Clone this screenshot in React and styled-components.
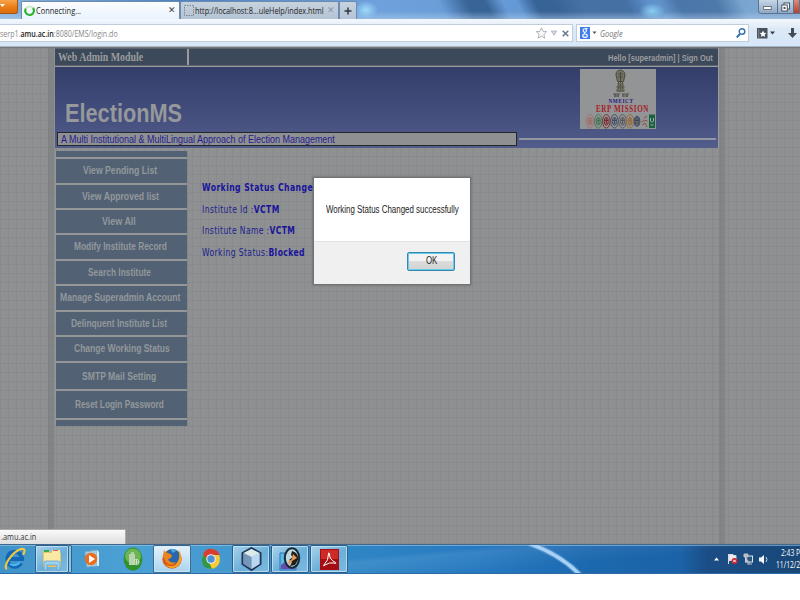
import React, { useLayoutEffect, useRef, useState } from "react";
import styled, { createGlobalStyle } from "styled-components";

const Global = createGlobalStyle`
  *{box-sizing:border-box}
  body{margin:0;background:#fff;overflow:hidden}
`;
const ui = '"Open Sans","Noto Sans",sans-serif';
const arial = '"Liberation Sans",Arial,sans-serif';

/* Text condensed or stretched to a given width */
const FitBox = styled.span`
  display:block;flex:none;width:${p => p.$w}px;white-space:nowrap;overflow:visible;
  margin-left:${p => p.$ml || 0}px;
`;
const FitInner = styled.span`display:inline-block;transform-origin:0 50%;white-space:pre;`;
function Fit({ w, ml, children }) {
  const ref = useRef(null);
  const [k, setK] = useState(1);
  useLayoutEffect(() => { setK(w / ref.current.offsetWidth); }, [w]);
  return <FitBox $w={w} $ml={ml}><FitInner ref={ref} style={{ transform: `scaleX(${k})` }}>{children}</FitInner></FitBox>;
}

const Screen = styled.div`width:800px;height:600px;display:flex;flex-direction:column;overflow:hidden;background:#fff;`;

/* Browser chrome */
const TabBar = styled.div`
  height:19px;flex:none;display:flex;align-items:stretch;font:9.6px/19px ${ui};color:#222;
  background:
    radial-gradient(ellipse 12px 9px at 366px 10px,#9fdcf8,transparent),
    radial-gradient(ellipse 13px 8px at 652px 11px,#8ccdf3,transparent),
    linear-gradient(180deg,rgba(255,255,255,0) 60%,rgba(190,215,240,.45)),
    linear-gradient(62deg,transparent 0 395px,rgba(48,90,140,.85) 420px 436px,transparent 452px 464px,rgba(48,90,140,.85) 480px 496px,rgba(62,104,154,.8) 520px 560px,transparent 580px 590px,rgba(62,104,154,.7) 606px 640px,transparent 662px),
    linear-gradient(90deg,#89b3de 0,#4a82c4 180px,#6fa2dc 380px,#6498d4 530px,#5c8fc9 640px,#7ba6d0 750px,#7fa5cc);
`;
const MenuButton = styled.div`
  width:18px;height:14px;margin-right:3px;background:linear-gradient(#f7a44c,#ea7d18 55%,#dd6d0c);
  border:1px solid #a65413;border-top:0;border-left:0;border-radius:0 0 3px 0;line-height:0;
`;
const Tab = styled.div`
  width:${p => p.$w}px;display:flex;align-items:center;padding-left:${p => p.$pl}px;height:18px;
  border:1px solid #6f8bab;border-width:1px 1px 0;margin-top:1px;border-radius:2px 2px 0 0;line-height:18px;
  background:${p => p.$active ? "linear-gradient(#fbfdff,#e9f3fd)" : "linear-gradient(#c7d2de,#b4c3d5)"};
`;
const Close = styled.span`margin-left:auto;padding-right:${p => p.$pr || 3}px;font:9px/17px ${arial};color:${p => p.$c || "#444"};`;
const WindowButtons = styled.div`
  margin-left:auto;width:42px;height:14px;display:flex;border:1px solid #5c7490;border-width:0 0 1px 1px;border-radius:0 0 0 4px;overflow:hidden;
`;
const WinBtn = styled.div`
  width:${p => p.$w}px;background:${p => p.$red ? "linear-gradient(#d98c7e,#b93f28)" : "linear-gradient(#c6d6e6,#8fa9c4)"};
  border-right:1px solid #5c7490;display:flex;align-items:center;justify-content:center;
`;
const Toolbar = styled.div`
  height:28px;flex:none;display:flex;align-items:center;padding:1px 0 0;
  background:linear-gradient(#f4f8fd,#dbe8f6 40%,#d6e7f8);border-bottom:1px solid #a4b5c8;font:9.6px/15px ${ui};color:#888;
`;
const Field = styled.div`
  width:${p => p.$w}px;height:18px;background:#fff;border:1px solid #bfcddd;border-left-width:${p => p.$bl ?? 1}px;
  display:flex;align-items:center;margin-right:${p => p.$mr}px;flex:none;
`;
const Icon = styled.svg`display:block;flex:none;margin-left:${p => p.$ml || 0}px;overflow:visible;`;
const Url = styled.span`b{color:#222;font-weight:600}`;
const Hint = styled.span`font-style:italic;color:#777;`;

/* Page */
const Page = styled.main`
  height:497px;flex:none;position:relative;padding:0 0 0 55px;border-top:1px solid #777;
  background-color:#8e9092;
  background-image:
    linear-gradient(90deg,transparent 48px,rgba(122,125,125,.6) 48px 54px,transparent 54px 719px,rgba(122,125,125,.6) 719px 725px,transparent 725px),
    repeating-linear-gradient(90deg,rgba(108,113,124,.17) 0 1px,transparent 1px 8px),
    repeating-linear-gradient(180deg,rgba(108,113,124,.17) 0 1px,transparent 1px 9px);
`;
const Header = styled.header`width:664px;border-right:1px solid #9a9b9d;`;
const TopRow = styled.div`display:flex;height:18px;gap:2px;background:#999b9d;border-top:1px solid #5d646d;border-bottom:1px solid #5d646d;`;
const TopCell = styled.div`
  width:${p => p.$w}px;background:#3c495a;color:#9a9c9e;display:flex;align-items:center;justify-content:${p => p.$end ? "flex-end" : "flex-start"};
  padding:${p => p.$end ? "1px 5px 0 0" : "1px 0 0 3px"};
  font:bold ${p => p.$end ? `9.8px/15px ${arial}` : `11.5px/15px "Liberation Serif",serif`};
`;
const Banner = styled.div`
  height:82px;border-top:1px solid #999b9d;background:linear-gradient(#333f69,#424d7c 55%,#525d8b);
  display:grid;grid-template-columns:465px 1fr;
`;
const BannerLeft = styled.div`padding:32px 0 0 10px;`;
const Brand = styled.h1`margin:0;font:bold 26px/28px ${arial};color:#96989b;`;
const Tagline = styled.div`
  margin:5px 0 0 -8px;width:460px;height:14px;border:1px solid #26272c;background:#8f9091;padding-left:3px;
  font:10.5px/12px ${arial};color:#24208e;
`;
const BannerRight = styled.div`padding:2px 2px 0 0;`;
const Logo = styled.svg`display:block;margin-left:60px;width:76px;height:60px;`;
const Rule = styled.div`height:2px;background:#9295a2;margin:9px 0 0 -1px;`;

const Body = styled.div`display:flex;margin-top:2px;`;
const Nav = styled.nav`width:133px;padding:0 0 0 1px;display:flex;flex-direction:column;gap:2px;background:#949697;height:275px;margin-top:1px;border-right:1px solid #85888b;`;
const NavItem = styled.div`
  height:${p => p.$h}px;background:#526274;color:#93979b;flex:none;
  font:bold 10.8px/${p => p.$h}px ${arial};display:flex;padding-left:${p => p.$pl || 0}px;
`;
const Content = styled.section`
  padding:27px 0 0 14px;font:9.8px/21.6px "DejaVu Sans","Noto Sans",sans-serif;letter-spacing:.5px;color:#211d8e;
  b{color:#19149a}
`;
const StatusPopup = styled.div`
  position:absolute;left:0;bottom:0;width:126px;height:15px;background:linear-gradient(#fafafa,#dedede);
  border:1px solid #aaa;border-width:1px 1px 0 0;font:9.5px/14px ${ui};color:#333;padding-left:1px;
`;
const Dialog = styled.div`
  position:absolute;left:313px;top:129px;width:158px;height:108px;background:#fff;border:1px solid #727374;
  box-shadow:0 0 2px rgba(50,50,50,.5);display:flex;flex-direction:column;
`;
const Message = styled.div`height:63px;padding:25px 0 0 12px;font:10px/14px ${arial};color:#222;`;
const Actions = styled.div`flex:1;background:#f0f0f0;border-top:1px solid #e2e2e2;padding:10px 15px 0 0;display:flex;justify-content:flex-end;`;
const Ok = styled.button`
  width:48px;height:19px;padding:0;border:1px solid #3b86ab;border-radius:2px;box-shadow:inset 0 0 0 1px #63cdf0;
  background:linear-gradient(#f3f3f3 50%,#dcdcdc 50%,#d2d2d2);font:10px/16px ${arial};color:#222;
  display:flex;justify-content:center;
`;

/* Taskbar */
const Taskbar = styled.footer`
  height:30px;flex:none;display:flex;border-top:1px solid #43678b;border-bottom:1px solid #2c6ba8;position:relative;
  background:linear-gradient(175deg,transparent 45%,rgba(255,255,255,.08) 50%,transparent 70%),
  linear-gradient(90deg,#3f93c9 0,#4ba0d4 130px,#4599cf 220px,#2f86c4 350px,#2779c1 480px,#1c68ae 590px,#1c62a8 680px,#1b4d85 708px,#194878 800px);
  box-shadow:inset 0 1px 0 rgba(160,210,240,.55);
`;
const Swoosh = styled.svg`position:absolute;left:490px;top:0;width:120px;height:28px;`;
const Task = styled.div`
  width:${p => p.$w}px;margin-left:${p => p.$ml || 0}px;height:28px;display:flex;align-items:center;justify-content:center;
  border:1px solid ${p => p.$open ? "rgba(20,65,105,.75)" : "transparent"};
  box-shadow:${p => p.$open ? "inset 0 0 0 1px rgba(210,238,255,.65)" : "none"};border-radius:2px;
  background:${p => p.$active ? "linear-gradient(#e4f2fb,#a9d4ee)" : p.$open ? "linear-gradient(145deg,#a9d2ea,#6bafd9 55%,#7dbbe0)" : "transparent"};
`;
const Stack = styled.div`
  width:3px;height:28px;border:solid rgba(20,65,105,.75);border-width:1px 1px 1px 0;border-radius:0 2px 2px 0;background:#8cc4e4;
`;
const Tray = styled.div`margin-left:auto;width:88px;display:flex;align-items:center;`;
const Clock = styled.div`
  margin-left:8px;width:25px;font:9.5px/12.5px ${ui};color:#fff;white-space:nowrap;
`;

const items = [
  ["View Pending List", 74, 27, 23.8], ["View Approved list", 77, 26, 23.2], ["View All", 34, 46, 23.4],
  ["Modify Institute Record", 93, 18, 23.4], ["Search Institute", 63, 32, 23.4], ["Manage Superadmin Account", 120, 4, 23.4],
  ["Delinquent Institute List", 96, 15, 23.6], ["Change Working Status", 96, 18, 23.7], ["SMTP Mail Setting", 74, 26, 26.3], ["Reset Login Password", 89, 19, 26.4]
];

const Mission = () => (
  <Logo viewBox="0 0 76 60">
    <rect width="76" height="60" fill="#939495" />
    <g fill="none" stroke="#4b4b3c" strokeWidth="1">
      <path d="M38.500 1.500q-3 1-2.500 4.500l1.500 6.500h6l1.500-6.500q0-3-2.500-4.500-2-1-4 0z" fill="#747365" />
      <path d="M38 5h5M38 8h5M40.500 3v18M38.500 12v8M42.500 12v8M36.500 21q4 3 8 0M36.500 18h8" />
    </g>
    <path d="M37.500 14h6l1 9h-8z" fill="#5d5d4b" opacity=".65" />
    <path d="M33 25h7M42 25h7M34 27h5M43 27h5M35 25v3M38 25v3M43 25v3M47 25v3" stroke="#454136" strokeWidth=".8" />
    <g fontFamily='"Liberation Serif",serif' fontWeight="bold">
      <text x="28.500" y="34" fontSize="7" fill="#232083" textLength="25" letterSpacing=".8" lengthAdjust="spacingAndGlyphs">NMEICT</text>
      <text x="16" y="43.300" fontSize="9.400" fill="#a51c2a" textLength="53" letterSpacing=".8" lengthAdjust="spacingAndGlyphs">ERP MISSION</text>
    </g>
    {[["#a66d6d", 10], ["#407454", 18.300], ["#7b282d", 26.300], ["#3f4c65", 34.500], ["#555861", 42.500], ["#9a6a35", 50], ["#34436e", 57]].map(([c, x], i) => (
      <g key={x} fill="none" stroke={c}>
        <ellipse cx={x} cy="52.300" rx={i > 5 ? 2.8 : 3.700} ry={i > 5 ? 5 : 6.800} strokeWidth=".9" />
        <ellipse cx={x} cy="52.300" rx="2" ry="4" fill={i > 5 ? "#a18b32" : "#8b8989"} strokeWidth="1" />
        <path d={`M${x - 1.700} 51.500h3.400M${x} 49v6`} />
      </g>
    ))}
    <path d="M61.500 53q3-3 6-1M62 56l3-2 2 4M64 49l3-2" fill="none" stroke="#8c4f40" />
    <rect x="69" y="45.500" width="6" height="13.500" fill="#176341" />
    <path d="M70.500 49v3q1.500 3 3 0v-3M70.500 56h3" fill="none" stroke="#9aa" />
  </Logo>
);

export default function App() {
  return (
    <Screen>
      <Global />
      <TabBar>
        <MenuButton><Icon width="6" height="12" viewBox="0 0 6 12"><path d="M0 4h5L2.500 7z" fill="#fff" /></Icon></MenuButton>
        <Tab $w={159} $pl={2} $active>
          <Icon width="11" height="12" viewBox="0 0 11 12"><circle cx="5.500" cy="5.700" r="4.300" fill="none" stroke="#c9ecc7" strokeWidth="2" /><path d="M5.500 10a4.300 4.300 0 0 1-3.700-6.500M5.500 10a4.300 4.300 0 0 0 3.500-7" fill="none" stroke="#28b22d" strokeWidth="2" /></Icon>
          <Fit w={45} ml={1}>Connecting...</Fit><Close>✕</Close>
        </Tab>
        <Tab $w={159} $pl={3}>
          <Icon width="10" height="11" viewBox="0 0 10 11"><rect x=".5" y=".5" width="9" height="10" fill="none" stroke="#7b8793" strokeDasharray="1.500 1" /></Icon>
          <Fit w={129} ml={1}>http://localhost:8...uleHelp/index.html</Fit><Close $pr={3} $c="#8997a6">✕</Close>
        </Tab>
        <Tab $w={18} $pl={4}><Icon width="8" height="8" viewBox="0 0 8 8"><path d="M4 .5v7M.5 4h7" stroke="#303841" strokeWidth="1.500" /></Icon></Tab>
        <WindowButtons>
          <WinBtn $w={19}><Icon width="9" height="9" viewBox="0 0 9 9"><rect x=".7" y="4.500" width="7.500" height="3" fill="#fff" stroke="#555d68" strokeWidth=".8" /></Icon></WinBtn>
          <WinBtn $w={17}><Icon width="9" height="10" viewBox="0 0 9 10"><rect x="3" y="1" width="5.500" height="6" fill="#fff" stroke="#465262" /><rect x=".8" y="3" width="5.500" height="6" fill="#fff" stroke="#465262" /><rect x="2.500" y="5" width="2" height="2" fill="#465262" /></Icon></WinBtn>
          <WinBtn $w={6} $red />
        </WindowButtons>
      </TabBar>
      <Toolbar>
        <Field $w={573} $mr={3} $bl={0}>
          <Fit w={118}><Url>serp1.<b>amu.ac.in</b>:8080/EMS/login.do</Url></Fit>
          <Icon $ml={418} width="11" height="12" viewBox="0 0 11 12"><path d="M5.500.8 7 4.300l3.700.300-2.800 2.700.9 3.900-3.300-2.100-3.300 2.100.9-3.900L.3 4.600 4 4.300z" fill="#f8f8f8" stroke="#a0a4a8" strokeWidth=".8" /></Icon>
          <Icon $ml={4} width="6" height="6" viewBox="0 0 6 6"><path d="M.3 1h5.400L3 5.300z" fill="#d6dce4" stroke="#9aa8b9" strokeWidth=".7" /></Icon>
          <Icon $ml={5} width="7" height="7" viewBox="0 0 7 7"><path d="m.7.700 5.600 5.600m0-5.600L.7 6.300" stroke="#68788a" strokeWidth="1.500" /></Icon>
        </Field>
        <Field $w={173} $mr={8}>
          <Icon $ml={3} width="10" height="12" viewBox="0 0 10 12"><rect width="10" height="12" fill="#3f7ded" /><g fill="none" stroke="#fff" strokeWidth="1.100"><ellipse cx="4.800" cy="3.500" rx="1.700" ry="1.800" /><path d="M5.500 1.600h2M5 5.300q-1 .7 0 1.200" /><ellipse cx="5" cy="8.700" rx="2.300" ry="1.700" /></g></Icon>
          <Icon $ml={2} width="5" height="4" viewBox="0 0 5 4"><path d="M.5.500h4L2.500 3z" fill="#555" /></Icon>
          <Hint><Fit w={23} ml={3}>Google</Fit></Hint>
          <Icon $ml={113} width="10" height="10" viewBox="0 0 10 10"><circle cx="6" cy="3.500" r="2.800" fill="none" stroke="#3170ad" strokeWidth="1.400" /><path d="m4 6-3.300 3.400" stroke="#3170ad" strokeWidth="2" /></Icon>
        </Field>
        <Icon width="11" height="11" viewBox="0 0 11 11"><path d="M0 0h10.500v10.500H0z" fill="#47515c" /><path d="M1.700 1v9" stroke="#9aa4ae" strokeWidth=".7" /><path d="m6 2.500 1 2.200 2.500.200-1.900 1.600.600 2.500L6 7.700 3.800 9l.600-2.500-1.900-1.600 2.500-.2z" fill="#fff" /></Icon>
        <Icon $ml={2} width="5" height="4" viewBox="0 0 5 4"><path d="M0 .5h5L2.500 3.500z" fill="#333e49" /></Icon>
        <Icon $ml={13} width="9" height="11" viewBox="0 0 9 11"><path d="M3 0h3v5h3L4.500 10 0 5h3z" fill="#414b56" /></Icon>
      </Toolbar>
      <Page>
        <Header>
          <TopRow>
            <TopCell $w={132}><Fit w={85}>Web Admin Module</Fit></TopCell>
            <TopCell $w={529} $end><Fit w={105}>Hello [superadmin] | Sign Out</Fit></TopCell>
          </TopRow>
          <Banner>
            <BannerLeft>
              <Brand><Fit w={117}>ElectionMS</Fit></Brand>
              <Tagline><Fit w={274}>A Multi Institutional &amp; MultiLingual Approach of Election Management</Fit></Tagline>
            </BannerLeft>
            <BannerRight><Mission /><Rule /></BannerRight>
          </Banner>
        </Header>
        <Body>
          <Nav>
            <NavItem $h={6} />
            {items.map(([t, w, pl, h]) => <NavItem key={t} $h={h} $pl={pl}><Fit w={w}>{t}</Fit></NavItem>)}
            <NavItem $h={6} />
          </Nav>
          <Content>
            <Fit w={117}><b>Working Status Changed</b></Fit>
            <Fit w={78}>Institute Id :<b>VCTM</b></Fit>
            <Fit w={93}>Institute Name :<b>VCTM</b></Fit>
            <Fit w={103}>Working Status:<b>Blocked</b></Fit>
          </Content>
        </Body>
        <StatusPopup><Fit w={35}>.amu.ac.in</Fit></StatusPopup>
        <Dialog>
          <Message><Fit w={133}>Working Status Changed successfully</Fit></Message>
          <Actions><Ok><Fit w={11}>OK</Fit></Ok></Actions>
        </Dialog>
      </Page>
      <Taskbar>
        <Swoosh viewBox="0 0 120 28"><path d="M38 -2Q72 10 92 32" fill="none" stroke="#75b0e8" strokeWidth="6" opacity=".5" /><path d="M38 -2Q72 10 92 32" fill="none" stroke="#a9d0f5" strokeWidth="3.500" /></Swoosh>
        <Task $w={30}>
          <Icon width="24" height="24" viewBox="0 0 24 24"><path d="M18 16A7.300 7.500 0 1 1 19 12H7" fill="none" stroke="#1268b5" strokeWidth="4" /><path d="M17 15A7.300 7.500 0 0 1 7 17" fill="none" stroke="#4db9ee" strokeWidth="2" /><path d="M4 22C-1 20 9 5 18 2q6-1 2 6" fill="none" stroke="#f7c73e" strokeWidth="2" /></Icon>
        </Task>
        <Task $w={34} $ml={5} $open>
          <Icon width="22" height="23" viewBox="0 0 22 23"><path d="M2 3h7l2 2h9v14H2z" fill="#e5c46a" /><path d="M3 5h8v-3h8v15H3z" fill="#fae9a5" /><path d="M3 2h5v2H3z" fill="#36a853" /><path d="M12 2h5v1h-5z" fill="#e36045" /><path d="M3 22v-7q0-2 2-2h12q2 0 2 2v7h-3v-5H6v5z" fill="#98d2f0" stroke="#5b9ec8" strokeWidth=".7" /></Icon>
        </Task>
        <Stack />
        <Task $w={40}>
          <Icon width="18" height="20" viewBox="0 0 18 20"><path d="M2 3 14 1v16L4 18z" fill="#a7cde5" stroke="#7cafd0" /><path d="m14 1 2 2v14h-2z" fill="#ddecf5" /><circle cx="8" cy="10" r="6.200" fill="#ec6e1c" /><path d="M6 6v8l6-4z" fill="#fff" /></Icon>
        </Task>
        <Task $w={41}>
          <Icon width="20" height="24" viewBox="0 0 20 24"><ellipse cx="10" cy="12" rx="9.500" ry="11.500" fill="#31922d" /><ellipse cx="10" cy="9" rx="8" ry="7.500" fill="#8ac86c" opacity=".65" /><path d="M6 7h6v11H6z" fill="#b8d3ad" /><path d="M8 6h3" stroke="#e7f3e1" /><circle cx="13.500" cy="15" r="2.600" fill="#65a553" stroke="#e7f3e1" strokeWidth=".8" /><path d="M13.500 12.500v5M11 15h5" stroke="#e7f3e1" strokeWidth=".8" /></Icon>
        </Task>
        <Task $w={38} $open $active>
          <Icon width="21" height="24" viewBox="0 0 21 24"><circle cx="10" cy="12" r="9.700" fill="#d65b17" /><circle cx="10.500" cy="9.500" r="7.500" fill="#2866ad" /><path d="M2 2q0 3 4 4l4 2-1 3-3 1q2 5 8 3-4 5-9 1l-4-6z" fill="#ed851f" /><path d="M16 2q7 9 1 16-7 7-14-1 8 5 12-1 4-6 1-14z" fill="#f3a223" /><path d="M8 2q4-1 6 2l-3 2z" fill="#4ba8db" /></Icon>
        </Task>
        <Task $w={40}>
          <Icon width="20" height="22" viewBox="0 0 20 22"><ellipse cx="10" cy="11" rx="9" ry="10" fill="#f7cb31" /><path d="M2 6q3-6 9-5 5 0 8 6h-9l-3 8z" fill="#d93d31" /><path d="M2 6 8 14l3 7Q0 21 1 10z" fill="#329848" /><circle cx="10" cy="11" r="4.800" fill="#eee" /><circle cx="10" cy="11" r="3.700" fill="#4b91d5" /></Icon>
        </Task>
        <Task $w={38} $ml={1} $open>
          <Icon width="21" height="24" viewBox="0 0 21 24"><path d="m10.500 1 9 5v11l-9 6-9-6V6z" fill="#aabdce" stroke="#203756" strokeWidth="2" /><path d="m2.500 6 8-4 8 4-8 4z" fill="#dcecec" /><path d="M10.500 10v12l8-5V6z" fill="#b9d8f0" /><path d="M10.500 10v12l-8-5V6z" fill="#7696ba" /></Icon>
        </Task>
        <Task $w={38} $ml={1} $open>
          <Icon width="22" height="24" viewBox="0 0 22 24"><path d="M1 6h16v17H1z" fill="#5abbe3" stroke="#3470b7" /><path d="M2 18q5-6 14 1v3H2z" fill="#694dae" /><ellipse cx="13" cy="11" rx="7.200" ry="9.700" fill="#c0d8de" stroke="#172b37" strokeWidth="2" /><path d="M13 4q7 2 6 9l-3 5-5 1 2-4-3-2 4-3-2-2z" fill="#221d18" /><path d="m14 7 4 4-5 3-3 4-1-3 4-3z" fill="#e99b59" /></Icon>
        </Task>
        <Task $w={38} $ml={1} $open>
          <Icon width="19" height="21" viewBox="0 0 19 21"><path d="M0 0h19v21H0z" fill="#a50d13" /><path d="M1 1h17v9H1z" fill="#ce2b26" /><path d="M3.500 16.500Q9 11 8.500 5q0-2 1-.5-.5 6 6 9 1.500 1.500-1.500.5-4.500-1-9 2-2 1.500-1.500.5z" fill="none" stroke="#fff" strokeWidth="1" /></Icon>
        </Task>
        <Tray>
          <Icon $ml={2} width="5" height="4" viewBox="0 0 5 4"><path d="M0 3.500 2.500.500 5 3.500z" fill="#fff" /></Icon>
          <Icon $ml={8} width="11" height="12" viewBox="0 0 11 12"><path d="M1.500 1v10M2 1.500h4l1 1h2v5H2z" fill="#eee" stroke="#d6dce0" /><circle cx="7.500" cy="8" r="3" fill="#cf262b" /><path d="m6.300 6.800 2.400 2.400m0-2.400-2.400 2.400" stroke="#fff" /></Icon>
          <Icon $ml={5} width="11" height="12" viewBox="0 0 11 12"><rect x="2.500" y="3" width="7" height="6" fill="#2a5780" stroke="#e2e6ea" /><path d="M1 1h4v3H1zM3 4v5h3M6 9v2M4 11h5" fill="#b8c0c6" stroke="#b8c0c6" /></Icon>
          <Icon $ml={5} width="9" height="11" viewBox="0 0 9 11"><path d="M0 3.500h2L5 1v9L2 7.500H0z" fill="#f5f5f5" /><path d="M7 3q2 2.500 0 5" fill="none" stroke="#bed0df" /></Icon>
          <Clock><Fit w={19} ml={5}>2:43 P</Fit><Fit w={24}>11/12/2</Fit></Clock>
        </Tray>
      </Taskbar>
    </Screen>
  );
}
